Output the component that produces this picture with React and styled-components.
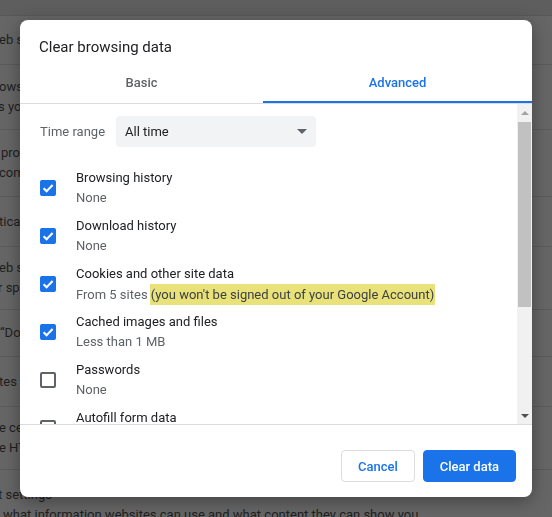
import React from "react";
import styled, { createGlobalStyle } from "styled-components";

const GlobalStyle = createGlobalStyle`
  html, body {
    margin: 0;
    padding: 0;
    background: #666666;
    overflow: hidden;
  }
  body {
    font-family: Roboto, "Liberation Sans", sans-serif;
    -webkit-font-smoothing: antialiased;
  }
`;

// the settings page behind the dialog: only its left edge shows
const pageRows = [
  { h: 49, lines: [{ t: "eb s", x: -1 }] },
  { h: 65, lines: [{ t: "ows", x: -1 }, { t: "s yo", x: -2 }] },
  { h: 67, lines: [{ t: "prov", x: 1 }, { t: "com", x: -1 }] },
  { h: 50, lines: [{ t: "tica", x: -1 }] },
  { h: 63, lines: [{ t: "eb s", x: -1 }, { t: "r sp", x: -2 }] },
  { h: 47, lines: [{ t: "\u201cDo", x: 0 }] },
  { h: 50, lines: [{ t: "tes", x: -1 }] },
  { h: 63, lines: [{ t: "e ce", x: -1 }, { t: "e HT", x: -1 }] },
  {
    h: 70,
    lines: [
      { t: "t settings", x: -2 },
      { t: "what information websites can use and what content they can show you", x: 3 },
    ],
  },
];

const items = [
  { title: "Browsing history", sub: "None", checked: true },
  { title: "Download history", sub: "None", checked: true },
  {
    title: "Cookies and other site data",
    sub: "From 5 sites",
    note: "(you won't be signed out of your Google Account)",
    checked: true,
  },
  { title: "Cached images and files", sub: "Less than 1 MB", checked: true },
  { title: "Passwords", sub: "None", checked: false },
  { title: "Autofill form data", sub: "None", checked: false },
];

function App() {
  return (
    <>
      <GlobalStyle />
      <Page>
        <PageTop />
        {pageRows.map((row, i) => (
          <PageRow key={i} $h={row.h}>
            {row.lines.map((line, j) => (
              <PageLine key={j} $x={line.x}>
                {line.t}
              </PageLine>
            ))}
          </PageRow>
        ))}
      </Page>

      <Dialog role="dialog">
        <Title>Clear browsing data</Title>
        <Tabs>
          <Tab>Basic</Tab>
          <Tab $active>Advanced</Tab>
        </Tabs>

        <Body>
          <ScrollArea>
            <RangeRow>
              <RangeLabel>Time range</RangeLabel>
              <Select>
                All time
                <Caret />
              </Select>
            </RangeRow>

            {items.map((item) => (
              <ItemRow key={item.title}>
                <Checkbox $checked={item.checked}>
                  {item.checked && (
                    <svg width="16" height="16" viewBox="0 0 16 16">
                      <polyline
                        points="3.6 8.2 6.6 11.2 12.6 5"
                        fill="none"
                        stroke="#fff"
                        strokeWidth="2"
                      />
                    </svg>
                  )}
                </Checkbox>
                <ItemText>
                  <ItemTitle>{item.title}</ItemTitle>
                  <ItemSub>
                    {item.sub}
                    {item.note && (
                      <>
                        {" "}
                        <Mark>{item.note}</Mark>
                      </>
                    )}
                  </ItemSub>
                </ItemText>
              </ItemRow>
            ))}
          </ScrollArea>

          <Scrollbar>
            <ScrollButton>
              <ArrowUp />
            </ScrollButton>
            <Thumb />
            <Track />
            <ScrollButton>
              <ArrowDown />
            </ScrollButton>
          </Scrollbar>
        </Body>

        <Footer>
          <Button>Cancel</Button>
          <Button $primary>Clear data</Button>
        </Footer>
      </Dialog>
    </>
  );
}

const Page = styled.div`
  display: flex;
  flex-direction: column;
  height: 517px;
  overflow: hidden;
  background: #666666;
`;

const PageTop = styled.div`
  height: 16px;
  flex-shrink: 0;
  background: #5e5e5e;
  border-bottom: 1px solid #595959;
  box-sizing: border-box;
`;

const PageRow = styled.div`
  height: ${(p) => p.$h}px;
  flex-shrink: 0;
  display: flex;
  flex-direction: column;
  justify-content: center;
  border-bottom: 1px solid #5b5b5b;
  box-sizing: border-box;
  overflow: hidden;
`;

const PageLine = styled.div`
  margin-left: ${(p) => p.$x}px;
  font-size: 13px;
  line-height: 20px;
  color: #1f1f1f;
  white-space: nowrap;
`;

const Dialog = styled.div`
  position: fixed;
  top: 20px;
  left: 20px;
  width: 512px;
  height: 477px;
  display: flex;
  flex-direction: column;
  background: #ffffff;
  border-radius: 8px;
  overflow: hidden;
  box-shadow: 0 4px 18px rgba(0, 0, 0, 0.35);
`;

const Title = styled.h2`
  margin: 0;
  padding: 17px 20px 0 19px;
  font-size: 15px;
  font-weight: 400;
  line-height: 20px;
  color: #202124;
`;

const Tabs = styled.div`
  display: grid;
  grid-template-columns: 243px 1fr;
  height: 47px;
  border-bottom: 1px solid #dadce0;
  box-sizing: border-box;
  flex-shrink: 0;
`;

const Tab = styled.div`
  display: flex;
  align-items: center;
  justify-content: center;
  padding-top: 6px;
  box-sizing: border-box;
  font-size: 13px;
  font-weight: 500;
  color: ${(p) => (p.$active ? "#1a73e8" : "#5f6368")};
  border-bottom: 2px solid ${(p) => (p.$active ? "#1a73e8" : "transparent")};
`;

const Body = styled.div`
  display: flex;
  height: 320px;
  flex-shrink: 0;
  border-bottom: 1px solid #dadce0;
`;

const ScrollArea = styled.div`
  flex: 1;
  overflow: hidden;
  padding: 12px 20px 0;
`;

const RangeRow = styled.div`
  display: flex;
  align-items: center;
  height: 31px;
  margin-bottom: 17px;
`;

const RangeLabel = styled.span`
  width: 76px;
  font-size: 13px;
  color: #5f6368;
`;

const Select = styled.div`
  width: 200px;
  height: 31px;
  box-sizing: border-box;
  display: flex;
  align-items: center;
  justify-content: space-between;
  padding: 0 9px 0 9px;
  background: #f1f3f4;
  border-radius: 4px;
  font-size: 13px;
  color: #202124;
`;

const Caret = styled.span`
  width: 0;
  height: 0;
  border-left: 5px solid transparent;
  border-right: 5px solid transparent;
  border-top: 5px solid #5f6368;
`;

const ItemRow = styled.div`
  display: flex;
  align-items: center;
  height: 48px;
  gap: 20px;
`;

const Checkbox = styled.span`
  width: 16px;
  height: 16px;
  flex-shrink: 0;
  box-sizing: border-box;
  border-radius: 2px;
  display: flex;
  background: ${(p) => (p.$checked ? "#1a73e8" : "transparent")};
  border: ${(p) => (p.$checked ? "none" : "2px solid #5f6368")};
`;

const ItemText = styled.div`
  display: flex;
  flex-direction: column;
  font-size: 13px;
  line-height: 20px;
`;

const ItemTitle = styled.span`
  color: #202124;
`;

const ItemSub = styled.span`
  color: #5f6368;
  white-space: nowrap;
`;

const Mark = styled.span`
  display: inline-block;
  line-height: 21px;
  padding: 0 1px;
  margin-left: -1px;
  background: #e9e27b;
  color: #3c4043;
`;

const Scrollbar = styled.div`
  width: 15px;
  flex-shrink: 0;
  display: flex;
  flex-direction: column;
  background: #f1f1f1;
`;

const ScrollButton = styled.div`
  height: 17px;
  flex-shrink: 0;
  display: flex;
  align-items: center;
  justify-content: center;
`;

const ArrowUp = styled.span`
  width: 0;
  height: 0;
  border-left: 4px solid transparent;
  border-right: 4px solid transparent;
  border-bottom: 4px solid #a3a3a3;
`;

const ArrowDown = styled.span`
  width: 0;
  height: 0;
  border-left: 4px solid transparent;
  border-right: 4px solid transparent;
  border-top: 4px solid #505050;
`;

const Thumb = styled.div`
  height: 185px;
  margin: 1px 1px 0;
  background: #c1c1c1;
`;

const Track = styled.div`
  flex: 1;
`;

const Footer = styled.div`
  flex: 1;
  display: flex;
  justify-content: flex-end;
  align-items: flex-start;
  gap: 8px;
  padding: 25px 16px 0;
`;

const Button = styled.button`
  height: 32px;
  padding: 0 16px;
  border-radius: 4px;
  font-family: inherit;
  font-size: 13px;
  font-weight: 500;
  cursor: pointer;
  color: ${(p) => (p.$primary ? "#ffffff" : "#1a73e8")};
  background: ${(p) => (p.$primary ? "#1a73e8" : "#ffffff")};
  border: 1px solid ${(p) => (p.$primary ? "#1a73e8" : "#dadce0")};
`;

export default App;
